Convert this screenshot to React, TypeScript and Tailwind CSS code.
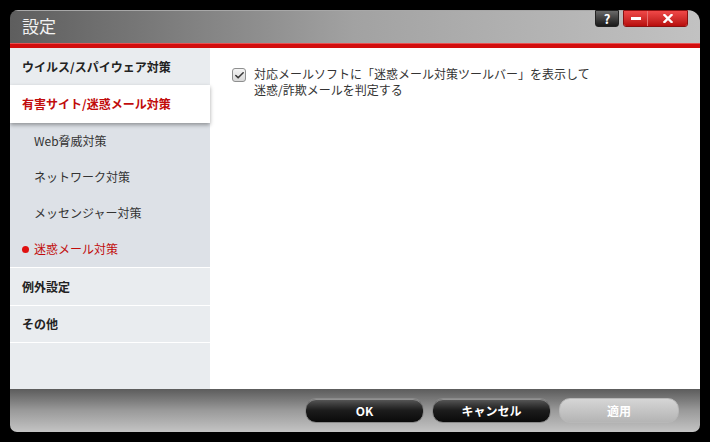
import { Check } from 'lucide-react'

// 設定ダイアログ: タイトルバー、左のカテゴリ一覧、右の設定領域、下部ボタン
const jp = { fontFamily: '"Noto Sans CJK JP", "Liberation Sans", sans-serif' }

const subItems = ['Web脅威対策', 'ネットワーク対策', 'メッセンジャー対策']

function DarkButton({ label }: { label: string }) {
  return (
    <button className="w-[119px] h-[25px] rounded-[11px] border border-[#8a8a8a] bg-gradient-to-b from-[#5a5a5a] via-[#1c1c1c] to-[#0a0a0a] text-white text-[12px] font-bold shadow-[inset_0_1px_0_rgba(255,255,255,0.35)]">
      {label}
    </button>
  )
}

export default function App() {
  return (
    <div className="w-[710px] h-[442px] bg-black p-[10px]" style={jp}>
      <div className="flex flex-col h-full rounded-tl-[8px] rounded-tr-[12px] rounded-b-[7px] overflow-hidden">
        {/* タイトルバー */}
        <div className="h-[33px] flex items-start border-t border-[#a8a8a8] bg-gradient-to-r from-[#5e5e5e] via-[#a2a2a2] to-[#c2c2c2]">
          <div className="flex-1 pl-[12px] pt-[4px] text-[17px] text-[#f2f2f2] leading-[22px]">設定</div>
          <div className="flex pr-[12px] -mt-px">
            <div className="w-[24px] h-[17px] rounded-b-[3px] border border-[#222] bg-gradient-to-b from-[#6a6a6a] to-[#1a1a1a] flex items-center justify-center text-white text-[13px] font-bold leading-none">
              ?
            </div>
            <div className="ml-[4px] flex rounded-b-[3px] border border-[#8a1010] overflow-hidden">
              <div className="w-[24px] h-[15px] bg-gradient-to-b from-[#f04848] to-[#b80c0c] flex items-center justify-center border-r border-[#e87070]">
                <div className="w-[10px] h-[3px] bg-white" />
              </div>
              <div className="w-[39px] h-[15px] bg-gradient-to-b from-[#f04848] to-[#b80c0c] flex items-center justify-center">
                <svg width="10" height="9" viewBox="0 0 10 9">
                  <path d="M1.5 1 L8.5 8 M8.5 1 L1.5 8" stroke="white" strokeWidth="2.4" strokeLinecap="square" />
                </svg>
              </div>
            </div>
          </div>
        </div>
        <div className="h-[5px] bg-[#d20d0d] border-t border-[#e85050]" />

        {/* 本体 */}
        <div className="flex flex-1 bg-white">
          <div className="w-[200px] flex flex-col bg-[#e9ecef] text-[12px]">
            <div className="h-[37px] flex items-center pl-[12px] font-bold text-[#222]">ウイルス/スパイウェア対策</div>
            <div className="h-[38px] flex items-center pl-[12px] font-bold text-[#c10c0c] bg-white relative z-10 shadow-[0_2px_4px_rgba(0,0,0,0.35)]">
              有害サイト/迷惑メール対策
            </div>
            <div className="bg-[#dde1e7]">
              {subItems.map((s) => (
                <div key={s} className="h-[36px] flex items-center pl-[24px] text-[#333]">
                  {s}
                </div>
              ))}
              <div className="h-[36px] flex items-center pl-[12px] text-[#c10c0c]">
                <span className="w-[7px] h-[7px] rounded-full bg-[#e01010] mr-[5px]" />
                迷惑メール対策
              </div>
            </div>
            <div className="h-[38px] flex items-center pl-[12px] font-bold text-[#222] border-t border-white">例外設定</div>
            <div className="h-[37px] flex items-center pl-[12px] font-bold text-[#222] border-t border-white">その他</div>
            <div className="flex-1 border-t border-white" />
          </div>

          <div className="flex-1 pl-[22px] pt-[18px]">
            <div className="flex items-start gap-[8px] text-[12px] text-[#333] leading-[16px]">
              <div className="mt-[2px] w-[14px] h-[14px] rounded-[3px] border border-[#8e8f8f] bg-gradient-to-b from-[#f4f4f4] to-[#d8d8d8] flex items-center justify-center shrink-0">
                <Check size={11} strokeWidth={3.5} className="text-[#3a3a3a]" />
              </div>
              <div>
                対応メールソフトに「迷惑メール対策ツールバー」を表示して
                <br />
                迷惑/詐欺メールを判定する
              </div>
            </div>
          </div>
        </div>

        {/* 下部ボタン */}
        <div className="h-[43px] flex items-start justify-end gap-[8px] pt-[9px] pr-[21px] bg-gradient-to-b from-[#5c5c5c] via-[#9a9a9a] to-[#c4c4c4]">
          <DarkButton label="OK" />
          <DarkButton label="キャンセル" />
          <button className="w-[120px] h-[25px] rounded-[11px] border border-[#b8b8b8] bg-gradient-to-b from-[#d6d6d6] to-[#b4b4b4] text-white text-[12px] font-bold">
            適用
          </button>
        </div>
      </div>
    </div>
  )
}
